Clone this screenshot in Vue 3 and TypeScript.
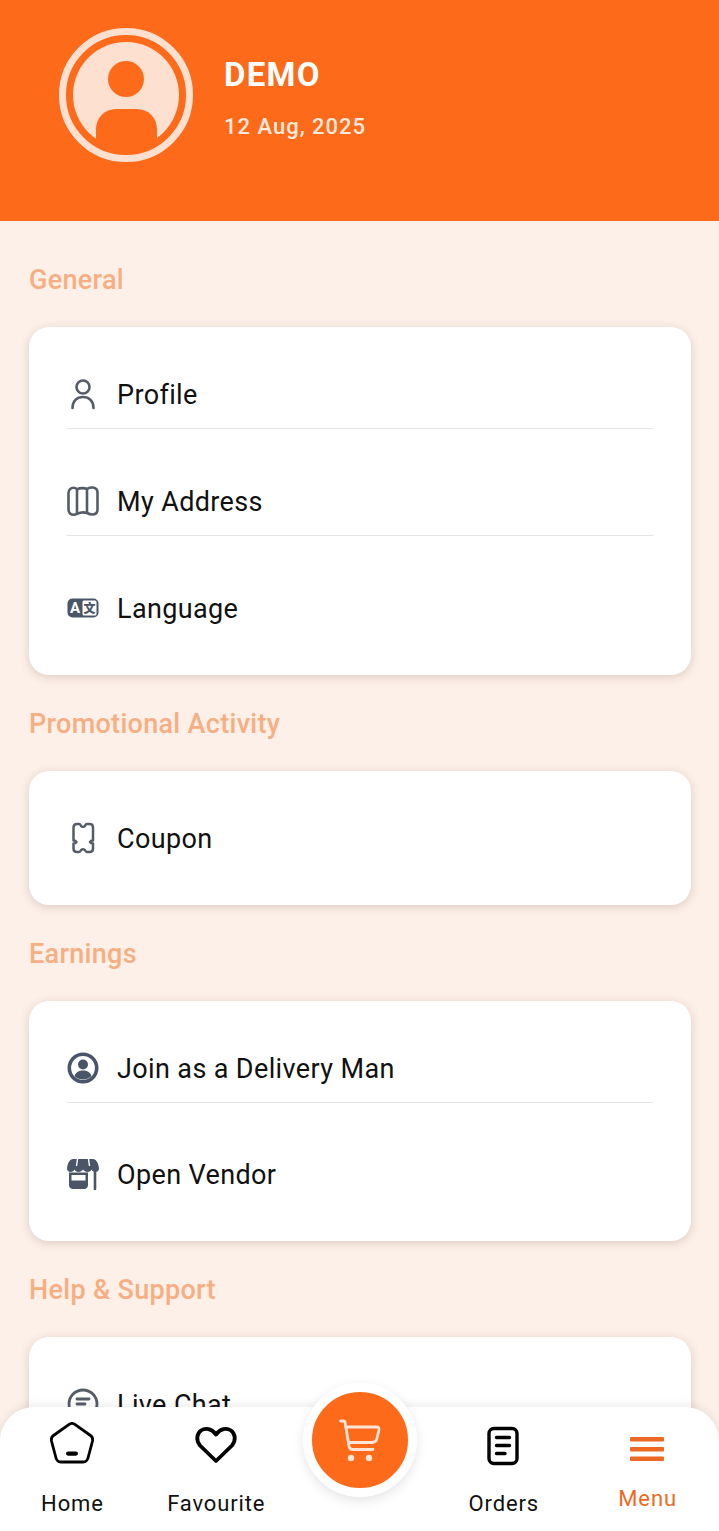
<script setup lang="ts">
interface Row { label: string; icon: string }
interface Section { title: string; rows: Row[] }

const sections: Section[] = [
  { title: 'General', rows: [
    { label: 'Profile', icon: 'profile' },
    { label: 'My Address', icon: 'map' },
    { label: 'Language', icon: 'lang' },
  ] },
  { title: 'Promotional Activity', rows: [{ label: 'Coupon', icon: 'coupon' }] },
  { title: 'Earnings', rows: [
    { label: 'Join as a Delivery Man', icon: 'delivery' },
    { label: 'Open Vendor', icon: 'store' },
  ] },
  { title: 'Help & Support', rows: [{ label: 'Live Chat', icon: 'chat' }] },
]
</script>

<template>
  <div class="screen">
    <header class="hero">
      <svg class="avatar" viewBox="0 0 134 134" width="134" height="134">
        <circle cx="67" cy="67" r="53" fill="#fde0d0" />
        <circle cx="67" cy="51" r="18" fill="#fd6a1a" />
        <path d="M37 122V101a20 20 0 0 1 20-20h21a20 20 0 0 1 20 20v21z" fill="#fd6a1a" />
        <circle cx="67" cy="67" r="63.500" fill="none" stroke="#fde0d0" stroke-width="7" />
      </svg>
      <div class="who">
        <div class="name">DEMO</div>
        <div class="date">12 Aug, 2025</div>
      </div>
    </header>

    <main class="content">
      <section v-for="s in sections" :key="s.title" class="section">
        <h2 class="section-title">{{ s.title }}</h2>
        <div class="card">
          <div v-for="r in s.rows" :key="r.label" class="row">
            <span class="row-icon">
              <svg v-if="r.icon === 'profile'" viewBox="0 0 32 32" width="32" height="32" fill="none" stroke="#555c68" stroke-width="2.600" stroke-linecap="round">
                <circle cx="16" cy="9" r="6.500" />
                <path d="M5.500 30c0-7 4.500-11 10.500-11s10.500 4 10.500 11" />
              </svg>
              <svg v-else-if="r.icon === 'map'" viewBox="0 0 32 32" width="32" height="32" fill="none" stroke="#555c68" stroke-width="2.600" stroke-linejoin="round">
                <path d="M1.500 8C1.500 4.500 4 2.800 6.500 2.800 8 2.800 9 3.300 10 4.300 13 3 17 3 20 3.800 22 2.800 24 2.300 26 2.500 28.500 2.800 30.500 4.500 30.500 7.500V24.500C30.500 27.500 28.500 29.200 26 29.500 24 29.700 22 29 20 28 17 27 13 27.500 10 28.800 9 29.500 8 29.800 6.500 29.800 4 29.800 1.500 28 1.500 24.500z" />
                <path d="M10 4.500V28.500M20 4V28" />
              </svg>
              <svg v-else-if="r.icon === 'lang'" viewBox="0 0 32 20" width="32" height="20">
                <rect x="0.500" y="0.500" width="31" height="19" rx="5" fill="#4b5568" />
                <rect x="15.500" y="2.500" width="14" height="15" rx="1.500" fill="#fff" />
                <text x="8" y="15" class="lang-a">A</text>
                <text x="22.500" y="15" class="lang-b">文</text>
              </svg>
              <svg v-else-if="r.icon === 'coupon'" viewBox="0 0 32 32" width="32" height="32" fill="none" stroke="#555c68" stroke-width="2.500" stroke-linejoin="round" stroke-linecap="round">
                <path d="M10 2h2c1 0 1.500 .800 2 1.800 .700 1.200 3.300 1.200 4 0 .500-1 1-1.800 2-1.800h2.500c2.500 0 3.500 1.500 3.500 3.500V18.500c-1.500 0-2.500 .500-3 1.500 .500 1 1.500 1.500 3 1.500v5c0 2-1 3.500-3.500 3.500H20c-1 0-1.500-.800-2-1.800-.700-1.200-3.300-1.200-4 0-.500 1-1 1.800-2 1.800h-2c-2.500 0-3.500-1.500-3.500-3.500v-5c1.500 0 2.500-.500 3-1.500-.500-1-1.500-1.500-3-1.500V5.500C6.500 3.500 7.500 2 10 2z" />
              </svg>
              <svg v-else-if="r.icon === 'delivery'" viewBox="0 0 32 32" width="32" height="32">
                <circle cx="16" cy="16" r="13.700" fill="none" stroke="#4b5568" stroke-width="3.600" />
                <circle cx="16" cy="12.500" r="5" fill="#4b5568" />
                <path d="M7.500 24c1.500-4 4.500-5.500 8.500-5.500s7 1.500 8.500 5.500c-2 2-5 3.500-8.500 3.500S9.500 26 7.500 24z" fill="#4b5568" />
              </svg>
              <svg v-else-if="r.icon === 'store'" viewBox="0 0 32 32" width="32" height="32">
                <path d="M6 1h20c3 0 5.500 4 6 9.500 0 2-1.500 3.500-3.500 3.500s-3.500-1-4-2.500c-.500 1.500-2 2.500-4 2.500s-3.500-1-4.500-2.500c-1 1.500-2.500 2.500-4.500 2.500s-3.500-1-4-2.500c-.500 1.500-2 2.500-4 2.500S0 12.500 0 10.500C.500 5 3 1 6 1z" fill="#4b5568" />
                <path d="M10.500 1 9.500 8M21.500 1 22.500 8" stroke="#fff" stroke-width="1.400" fill="none" />
                <path d="M2 14.500h19V27c0 2-1.500 4-4 4H6c-2.500 0-4-2-4-4z" fill="#4b5568" />
                <rect x="4.500" y="17" width="14" height="5.500" fill="#fff" />
                <path d="M28 14v17" stroke="#4b5568" stroke-width="2.600" stroke-linecap="round" />
              </svg>
              <svg v-else viewBox="0 0 32 32" width="32" height="32" fill="none" stroke="#555c68" stroke-width="2.800" stroke-linecap="round">
                <circle cx="16" cy="16" r="14" />
                <path d="M10 11h12M10 16h8M10 21h10" />
              </svg>
            </span>
            <span class="row-label">{{ r.label }}</span>
          </div>
        </div>
      </section>
    </main>

    <nav class="nav">
      <div class="nav-item">
        <span class="nav-icon">
          <svg viewBox="0 0 44 44" width="44" height="44" fill="none" stroke="#000" stroke-width="2.800" stroke-linejoin="round">
            <path d="M18.800 2.600c1.900-1.400 4.500-1.400 6.400 0L40.500 13.500c1.800 1.300 2.500 3.300 2 5.500L38 36c-.700 2.600-2.500 4-5 4H11c-2.500 0-4.300-1.400-5-4L1.500 19c-.500-2.200.200-4.200 2-5.500z" />
            <rect x="16" y="29.500" width="12" height="4.200" rx="2.100" fill="#000" stroke="none" />
          </svg>
        </span>
        <span class="nav-label">Home</span>
      </div>
      <div class="nav-item">
        <span class="nav-icon">
          <svg viewBox="0 0 44 44" width="44" height="44" fill="none" stroke="#000" stroke-width="3.800" stroke-linejoin="round">
            <path d="M22 39 6 23.500C1.500 18 3 11.500 7 8.500 11.500 5.500 17.500 6.500 22 12.500 26.500 6.500 32.500 5.500 37 8.500 41 11.500 42.500 18 38 23.500z" />
          </svg>
        </span>
        <span class="nav-label">Favourite</span>
      </div>
      <div class="nav-item nav-slot" aria-hidden="true"></div>
      <div class="nav-item">
        <span class="nav-icon">
          <svg viewBox="0 0 44 44" width="44" height="44" fill="none" stroke="#000" stroke-linecap="round">
            <rect x="8" y="6.500" width="28" height="35" rx="5" stroke-width="3.400" />
            <path d="M15.500 15.500H28.500M15.500 23.500H28.500M15.500 31.500H24" stroke-width="3.400" />
          </svg>
        </span>
        <span class="nav-label">Orders</span>
      </div>
      <div class="nav-item nav-item--active">
        <span class="nav-icon">
          <svg viewBox="0 0 44 44" width="44" height="44" fill="#ee6a24">
            <rect x="5" y="15" width="34" height="4.600" rx="1" />
            <rect x="5" y="25" width="34" height="4.600" rx="1" />
            <rect x="5" y="34.500" width="34" height="4.600" rx="1" />
          </svg>
        </span>
        <span class="nav-label">Menu</span>
      </div>
      <button class="cart" type="button" aria-label="Cart">
        <svg viewBox="0 0 44 44" width="44" height="44" fill="none" stroke="#fde6d8" stroke-width="2.800" stroke-linecap="round" stroke-linejoin="round">
          <path d="M2.500 3H5c1.300 0 2 .700 2.200 2L11 28c.300 2 1 3.500 3.500 3.500H35" />
          <path d="M7.800 9H38.500c2 0 2.800 1 2.500 3L39 20c-.500 3-2.500 4.500-5 4.500H10.500" />
          <circle cx="13" cy="40" r="3.200" fill="#fde6d8" stroke="none" />
          <circle cx="31" cy="40" r="3.200" fill="#fde6d8" stroke="none" />
        </svg>
      </button>
    </nav>
  </div>
</template>

<style>
html, body { margin: 0; padding: 0; background: #fdf0e8; }
</style>

<style scoped>
.screen {
  position: relative;
  width: 719px;
  height: 1531px;
  overflow: hidden;
  background: #fdf0e8;
  font-family: Roboto, "Noto Sans CJK SC", sans-serif;
}
.hero {
  height: 221px;
  box-sizing: border-box;
  padding: 28px 0 0 59px;
  background: #fd6a1a;
  display: flex;
  align-items: flex-start;
  gap: 31px;
}
.avatar { display: block; flex: none; }
.who { color: #fff; padding-top: 27px; }
.name { font-size: 33px; font-weight: 700; line-height: 40px; letter-spacing: 1.300px; }
.date { font-size: 22px; font-weight: 500; line-height: 28px; margin-top: 18px; color: #fde9dd; letter-spacing: 1px; }
.content { padding: 10.400px 28px 0 29px; }
.section { padding-top: 34px; }
.section-title {
  margin: 0 0 32px;
  font-size: 27px;
  font-weight: 500;
  line-height: 30px;
  letter-spacing: .300px;
  color: #f6ae82;
}
.card {
  background: #fff;
  border-radius: 20px;
  padding: 50px 38px 50px;
  box-shadow: 0 2px 10px rgba(90, 60, 40, .2);
}
.row {
  display: flex;
  align-items: center;
  height: 34px;
  padding-bottom: 17px;
  margin-bottom: 54.600px;
  border-bottom: 1px solid #e4e4e4;
}
.row:last-child { padding-bottom: 0; margin-bottom: 0; border-bottom: 0; }
.row-icon { width: 32px; height: 32px; display: flex; align-items: center; justify-content: center; flex: none; }
.row-icon svg { display: block; }
.row-label { margin: 2px 0 0 18px; font-size: 27px; line-height: 34px; color: #111; letter-spacing: .370px; }
.lang-a { font: 700 15px Roboto, sans-serif; fill: #fff; text-anchor: middle; }
.lang-b { font: 900 12px "Noto Sans CJK SC", sans-serif; fill: #4b5568; text-anchor: middle; }
.nav {
  position: absolute;
  left: 0;
  right: 0;
  bottom: 0;
  height: 124px;
  box-sizing: border-box;
  padding-top: 15px;
  background: #fff;
  border-radius: 34px 34px 0 0;
  display: grid;
  grid-template-columns: repeat(5, 1fr);
  box-shadow: 0 -2px 10px rgba(0, 0, 0, .08);
}
.nav-item { display: flex; flex-direction: column; align-items: center; }
.nav-icon { display: block; width: 44px; height: 44px; }
.nav-icon svg { display: block; }
.nav-label { margin-top: 25px; padding-left: 1px; font-size: 22px; line-height: 26px; color: #111; letter-spacing: .850px; white-space: nowrap; }
.nav-item--active .nav-label { margin-top: 20px; color: #ee6a24; }
.cart {
  position: absolute;
  left: 50%;
  top: -24px;
  transform: translateX(-50%);
  width: 96px;
  height: 96px;
  padding: 0;
  box-sizing: content-box;
  border: 9px solid #fff;
  border-radius: 50%;
  background: #fd6a1a;
  display: flex;
  align-items: center;
  justify-content: center;
  box-shadow: 0 4px 12px rgba(0, 0, 0, .1);
}
.cart svg { display: block; }
</style>
